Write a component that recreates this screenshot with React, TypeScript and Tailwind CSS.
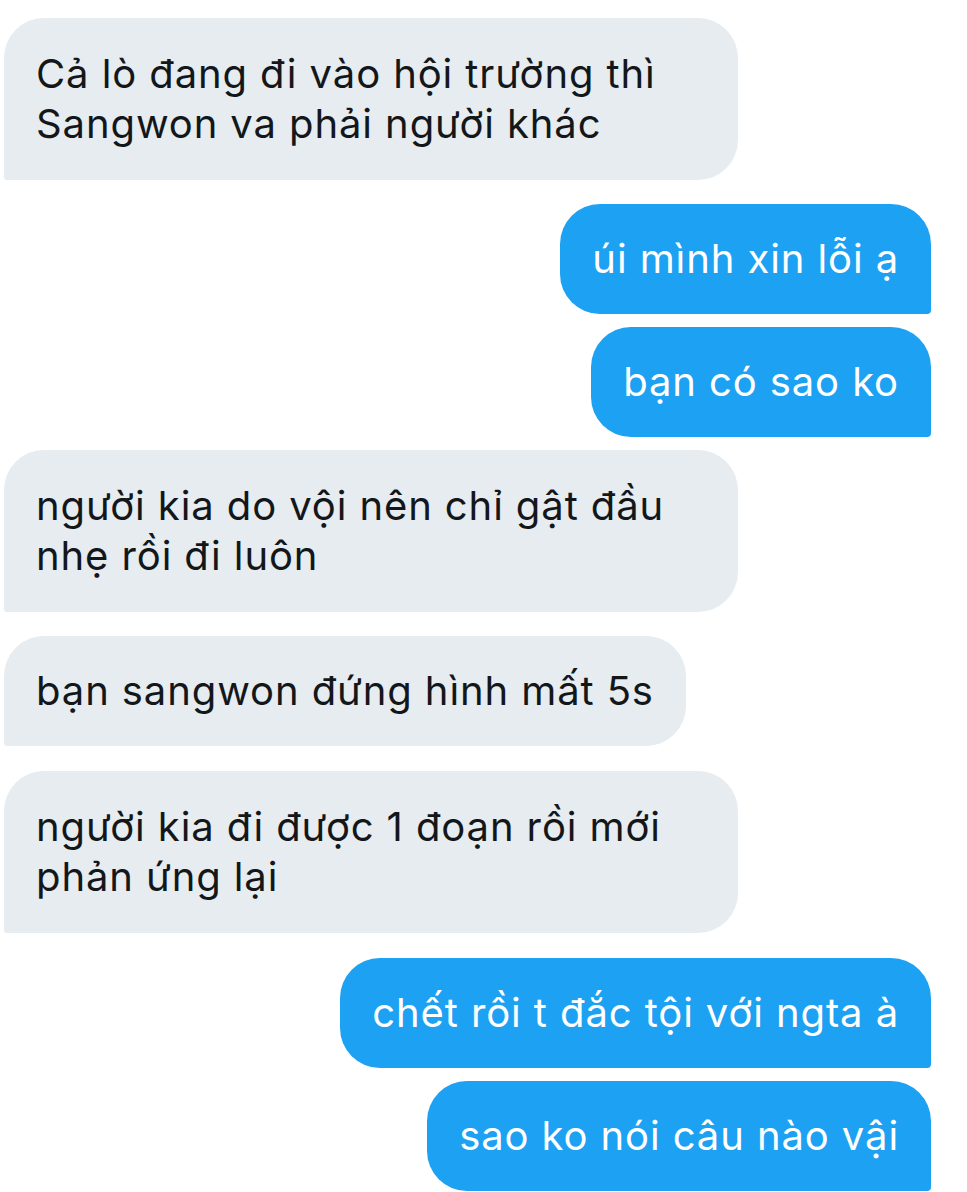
import React from 'react'

type Msg = {
  id: number
  mine: boolean
  lines: string[]
  gap: string
  wide?: boolean
}

const messages: Msg[] = [
  { id: 1, mine: false, lines: ['Cả lò đang đi vào hội trường thì', 'Sangwon va phải người khác'], gap: 'mt-[18px]', wide: true },
  { id: 2, mine: true, lines: ['úi mình xin lỗi ạ'], gap: 'mt-[24px]' },
  { id: 3, mine: true, lines: ['bạn có sao ko'], gap: 'mt-[13px]' },
  { id: 4, mine: false, lines: ['người kia do vội nên chỉ gật đầu', 'nhẹ rồi đi luôn'], gap: 'mt-[13px]', wide: true },
  { id: 5, mine: false, lines: ['bạn sangwon đứng hình mất 5s'], gap: 'mt-[24px]' },
  { id: 6, mine: false, lines: ['người kia đi được 1 đoạn rồi mới', 'phản ứng lại'], gap: 'mt-[25px]', wide: true },
  { id: 7, mine: true, lines: ['chết rồi t đắc tội với ngta à'], gap: 'mt-[25px]' },
  { id: 8, mine: true, lines: ['sao ko nói câu nào vậi'], gap: 'mt-[13px]' },
]

const Bubble: React.FC<{ msg: Msg }> = ({ msg }) => {
  const base = 'px-[32px] text-[40px] leading-[50px] tracking-[0.9px] whitespace-nowrap'
  if (msg.mine) {
    return (
      <div className={`flex justify-end pr-[36px] ${msg.gap}`}>
        <div className={`${base} py-[30px] bg-[#1da1f2] text-white rounded-[40px] rounded-br-[4px]`}>
          {msg.lines[0]}
        </div>
      </div>
    )
  }
  return (
    <div className={`flex justify-start pl-[4px] ${msg.gap}`}>
      <div
        className={`${base} bg-[#e6ecf0] text-[#14171a] rounded-[40px] rounded-bl-[3px] ${
          msg.wide ? 'w-[734px] py-[31px]' : 'py-[30px]'
        }`}
      >
        {msg.lines.map((line, i) => (
          <div key={i}>{line}</div>
        ))}
      </div>
    </div>
  )
}

const App: React.FC = () => {
  return (
    <div className="w-[967px] h-[1192px] bg-white overflow-hidden font-['Inter','Noto_Sans',sans-serif]">
      {messages.map((m) => (
        <Bubble key={m.id} msg={m} />
      ))}
    </div>
  )
}

export default App
